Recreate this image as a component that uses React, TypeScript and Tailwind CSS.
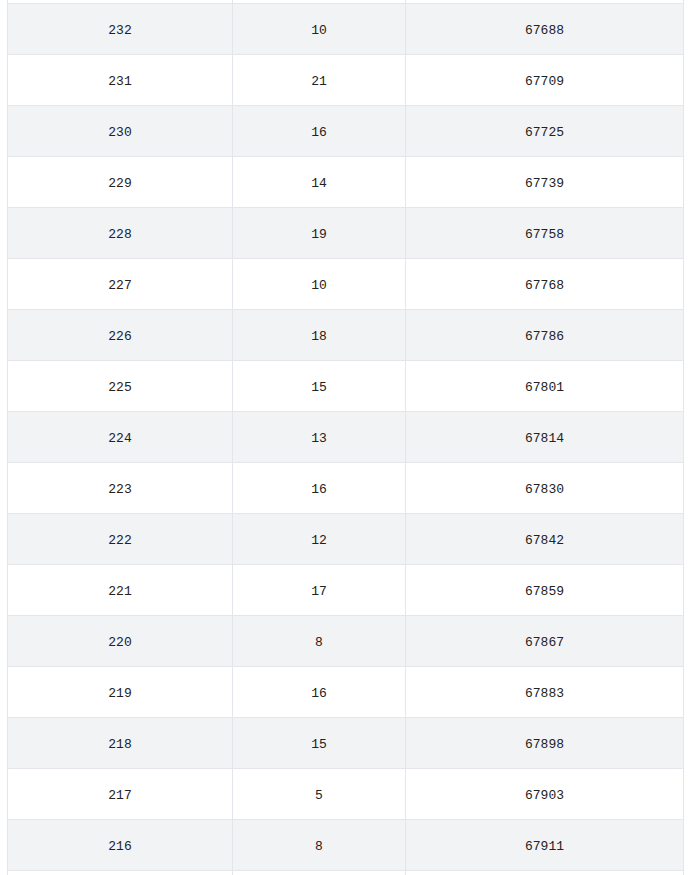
const rows: [number, number, number][] = [
  [233, 12, 67678],
  [232, 10, 67688],
  [231, 21, 67709],
  [230, 16, 67725],
  [229, 14, 67739],
  [228, 19, 67758],
  [227, 10, 67768],
  [226, 18, 67786],
  [225, 15, 67801],
  [224, 13, 67814],
  [223, 16, 67830],
  [222, 12, 67842],
  [221, 17, 67859],
  [220, 8, 67867],
  [219, 16, 67883],
  [218, 15, 67898],
  [217, 5, 67903],
  [216, 8, 67911],
  [215, 11, 67922],
]

export default function App() {
  return (
    <div className="h-[875px] overflow-hidden bg-white">
      <div
        className="ml-[7px] mt-[-47px] w-[677px] border-x border-[#e5e6eb] text-[13px] text-[#222]"
        style={{ fontFamily: '"Liberation Mono", "DejaVu Sans Mono", monospace' }}
      >
        {rows.map(([issue, count, total], i) => {
          // first and last rows are only partly on screen
          const hidden = i === 0 || i === rows.length - 1
          return (
            <div
              key={issue}
              className={`grid h-[51px] grid-cols-[225px_173px_277px] border-b border-[#e5e6eb] ${
                i % 2 === 1 ? "bg-[#f2f3f5]" : "bg-white"
              }`}
            >
              <div className="flex items-center justify-center border-r border-[#e5e6eb] pt-[4px]">
                {hidden ? "" : issue}
              </div>
              <div className="flex items-center justify-center border-r border-[#e5e6eb] pt-[4px]">
                {hidden ? "" : count}
              </div>
              <div className="flex items-center justify-center pt-[4px]">{hidden ? "" : total}</div>
            </div>
          )
        })}
      </div>
    </div>
  )
}
